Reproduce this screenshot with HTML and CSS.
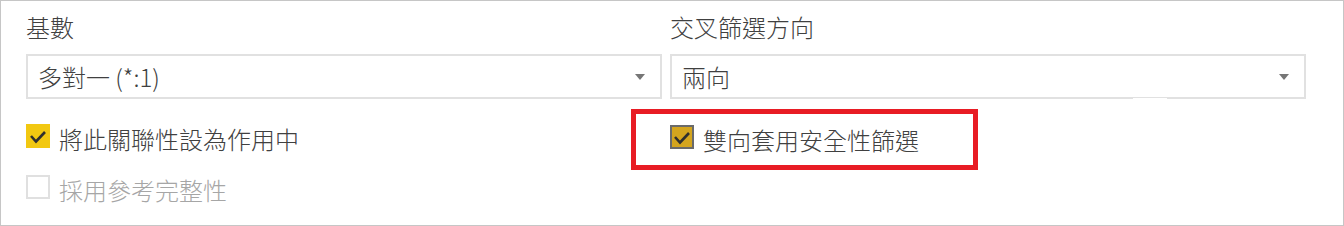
FILE: index.html
```html
<!DOCTYPE html>
<html lang="zh-Hant">

<head>
    <meta charset="UTF-8">
    <title>編輯關聯性</title>
    <link rel="stylesheet" href="styles.css">
</head>

<body>
    <div class="panel">
        <div class="grid">
            <!-- left column -->
            <div class="col">
                <div class="field-label">基數</div>
                <div class="select">
                    <span class="select-text">多對一 (*:1)</span>
                    <span class="arrow"></span>
                </div>
                <div class="check-row">
                    <span class="box checked">
                        <svg viewBox="0 0 24 24" width="24" height="24"><polyline points="5,12 10,17.5 19,8" /></svg>
                    </span>
                    <span class="check-label">將此關聯性設為作用中</span>
                </div>
                <div class="check-row disabled">
                    <span class="box"></span>
                    <span class="check-label">採用參考完整性</span>
                </div>
            </div>

            <!-- right column -->
            <div class="col">
                <div class="field-label">交叉篩選方向</div>
                <div class="select notch">
                    <span class="select-text">兩向</span>
                    <span class="arrow"></span>
                </div>
                <div class="check-row highlighted">
                    <span class="box checked dim">
                        <svg viewBox="0 0 24 24" width="24" height="24"><polyline points="5,12 10,17.5 19,8" /></svg>
                    </span>
                    <span class="check-label">雙向套用安全性篩選</span>
                    <span class="callout"></span>
                </div>
            </div>
        </div>
    </div>
</body>

</html>
```

FILE: styles.css
```css
html,
body {
    margin: 0;
    background: #fff;
}

body {
    font-family: "Noto Sans CJK TC", "Noto Sans", sans-serif;
    font-weight: 300;
    color: #404040;
}

.panel {
    box-sizing: border-box;
    width: 1344px;
    height: 226px;
    border: 1px solid #c6c6c6;
    padding: 14px 0 0 25px;
}

.grid {
    display: grid;
    grid-template-columns: 636px 636px;
    column-gap: 8px;
}

.field-label {
    font-size: 24px;
    line-height: 24px;
}

.select {
    position: relative;
    box-sizing: border-box;
    height: 45px;
    margin-top: 15px;
    border: 2px solid #e1e1e1;
    padding: 0 15px 0 10px;
    display: flex;
    align-items: center;
    justify-content: space-between;
}

.select-text {
    font-size: 24px;
    line-height: 24px;
    padding-top: 1px;
}

.arrow {
    width: 0;
    height: 0;
    border-left: 5.5px solid transparent;
    border-right: 5.5px solid transparent;
    border-top: 6px solid #767676;
}

/* little gap in the bottom border, as in the capture */
.notch::after {
    content: "";
    position: absolute;
    left: 461px;
    bottom: -2px;
    width: 34px;
    height: 1px;
    background: #fff;
}

.check-row {
    position: relative;
    display: flex;
    align-items: flex-start;
    gap: 9px;
    margin-top: 25px;
}

.check-row.disabled {
    margin-top: 24px;
}

.box {
    box-sizing: border-box;
    width: 24px;
    height: 24px;
    flex: none;
    border: 2px solid #e0e0e0;
    background: #fff;
}

.box svg {
    display: block;
    margin: -2px;
}

.box polyline {
    fill: none;
    stroke: #2f2f2f;
    stroke-width: 2.6;
}

.box.checked {
    border: none;
    background: #f2c811;
}

.box.checked svg {
    margin: 0;
}

.box.dim {
    border: 2px solid #6a6a6a;
    background: #d4a51e;
}

.box.dim svg {
    margin: -2px;
}

.check-label {
    font-size: 24px;
    line-height: 24px;
    padding-top: 3px;
}

.disabled .check-label {
    color: #a6a6a6;
}

.highlighted {
    margin-top: 26px;
}

.callout {
    position: absolute;
    left: -39px;
    top: -16px;
    width: 347px;
    height: 61px;
    box-sizing: border-box;
    border: 5px solid #e81c24;
}
```
